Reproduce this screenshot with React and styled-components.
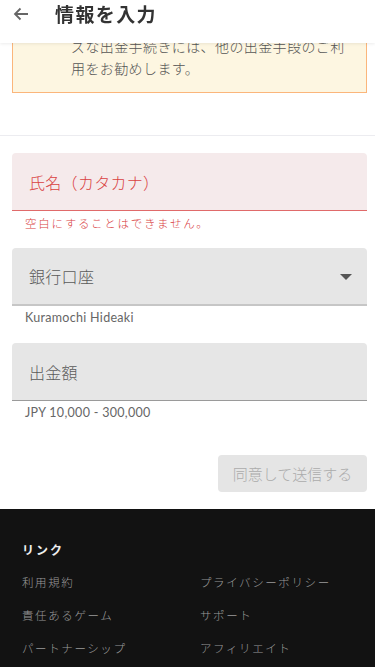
import React from "react";
import styled, { createGlobalStyle } from "styled-components";

const Global = createGlobalStyle`
  html, body { margin: 0; padding: 0; background: #fff; }
  body { font-family: Lato, "Noto Sans CJK JP", sans-serif; -webkit-font-smoothing: antialiased; }
  * { box-sizing: border-box; }
`;

const Header = styled.header`
  position: fixed;
  top: 0; left: 0; right: 0;
  height: 43px;
  background: #fff;
  box-shadow: 0 1px 3px rgba(0,0,0,0.08);
  display: flex;
  align-items: flex-start;
  padding: 3px 0 0 12px;
  gap: 25px;
  z-index: 10;
`;

const BackButton = styled.button`
  border: 0; background: none; padding: 0;
  width: 18px; height: 22px;
  display: flex; align-items: center; justify-content: center;
  color: #666;
`;

const Title = styled.h1`
  margin: 0;
  font-family: "Noto Sans CJK JP", sans-serif;
  font-size: 19px;
  font-weight: 700;
  line-height: 22px;
  color: #333;
  letter-spacing: 1.4px;
`;

const Main = styled.main`
  padding: 20px 8px 0 12px;
  display: flex;
  flex-direction: column;
`;

const Notice = styled.div`
  background: #fdf6e1;
  border: 1px solid #fbb67b;
  padding: 14px 0 13px 58px;
`;

const NoticeText = styled.p`
  margin: 0;
  width: 277px;
  font-family: "Noto Sans CJK JP", sans-serif;
  font-size: 14px;
  font-weight: 300;
  line-height: 22px;
  color: #555;
  letter-spacing: 0.4px;
`;

const Divider = styled.hr`
  border: 0;
  height: 1px;
  background: #ececf0;
  margin: 42px -8px 17px -12px;
`;

const FieldGroup = styled.div`
  display: flex;
  flex-direction: column;
  margin-bottom: 17px;
`;

const Field = styled.div`
  height: 58px;
  border-radius: 4px 4px 0 0;
  background: ${p => (p.$error ? "#f5eaeb" : "#e6e6e6")};
  border-bottom: ${p => (p.$error ? "1px solid #e06a6a" : p.$thick ? "2px solid #c6c6c6" : "1px solid #9a9a9a")};
  display: flex;
  align-items: center;
  justify-content: space-between;
  padding: 0 15px 0 17px;
`;

const Label = styled.span`
  font-family: "Noto Sans CJK JP", sans-serif;
  font-size: 16px;
  font-weight: 300;
  color: ${p => (p.$error ? "#d9413f" : "#5a5a5a")};
  letter-spacing: 0.3px;
`;

const Caret = styled.span`
  width: 0; height: 0;
  border-left: 6px solid transparent;
  border-right: 6px solid transparent;
  border-top: 6px solid #555;
  margin-top: 2px;
`;

const Helper = styled.div`
  padding: 4px 0 0 13px;
  font-family: ${p => (p.$error ? `"Noto Sans CJK JP", sans-serif` : `Lato, "Noto Sans CJK JP", sans-serif`)};
  font-size: ${p => (p.$error ? "11.5px" : "12.5px")};
  font-weight: ${p => (p.$error ? 300 : 400)};
  line-height: 16px;
  color: ${p => (p.$error ? "#d9413f" : "#666")};
  letter-spacing: ${p => (p.$error ? "1.7px" : "0.3px")};
`;

const Actions = styled.div`
  display: flex;
  justify-content: flex-end;
  margin-top: 17px;
  margin-bottom: 17px;
`;

const Submit = styled.button`
  width: 149px;
  height: 37px;
  border: 0;
  border-radius: 4px;
  background: #e5e5e5;
  color: #ababab;
  font-family: "Noto Sans CJK JP", sans-serif;
  font-size: 15px;
  font-weight: 300;
  padding: 0;
`;

const Footer = styled.footer`
  background: #121212;
  padding: 32px 20px 40px 22px;
  min-height: 200px;
`;

const FooterHeading = styled.h2`
  margin: 0 0 6px;
  font-family: "Noto Sans CJK JP", sans-serif;
  font-size: 12px;
  font-weight: 700;
  color: #eee;
  letter-spacing: 2px;
  line-height: 18px;
`;

const LinkGrid = styled.div`
  display: grid;
  grid-template-columns: 178px 1fr;
  grid-auto-rows: 33px;
  align-items: center;
`;

const FooterLink = styled.a`
  font-family: "Noto Sans CJK JP", sans-serif;
  font-size: 11.5px;
  font-weight: 300;
  letter-spacing: 1.6px;
  color: #9a9a9a;
  text-decoration: none;
`;

const links = [
  "利用規約", "プライバシーポリシー",
  "責任あるゲーム", "サポート",
  "パートナーシップ", "アフィリエイト",
];

export default function App() {
  return (
    <>
      <Global />
      <Header>
        <BackButton aria-label="戻る">
          <svg width="16" height="14" viewBox="0 0 16 14" fill="none">
            <path d="M15 7H2M7.5 1.5L2 7l5.5 5.5" stroke="#666" strokeWidth="1.8" />
          </svg>
        </BackButton>
        <Title>情報を入力</Title>
      </Header>
      <Main>
        <Notice>
          <NoticeText>ズな出金手続きには、他の出金手段のご利用をお勧めします。</NoticeText>
        </Notice>
        <Divider />
        <FieldGroup>
          <Field $error>
            <Label $error>氏名（カタカナ）</Label>
          </Field>
          <Helper $error>空白にすることはできません。</Helper>
        </FieldGroup>
        <FieldGroup>
          <Field $thick>
            <Label>銀行口座</Label>
            <Caret />
          </Field>
          <Helper>Kuramochi Hideaki</Helper>
        </FieldGroup>
        <FieldGroup>
          <Field>
            <Label>出金額</Label>
          </Field>
          <Helper>JPY 10,000 - 300,000</Helper>
        </FieldGroup>
        <Actions>
          <Submit disabled>同意して送信する</Submit>
        </Actions>
      </Main>
      <Footer>
        <FooterHeading>リンク</FooterHeading>
        <LinkGrid>
          {links.map(l => (
            <FooterLink key={l} href="#">{l}</FooterLink>
          ))}
        </LinkGrid>
      </Footer>
    </>
  );
}
